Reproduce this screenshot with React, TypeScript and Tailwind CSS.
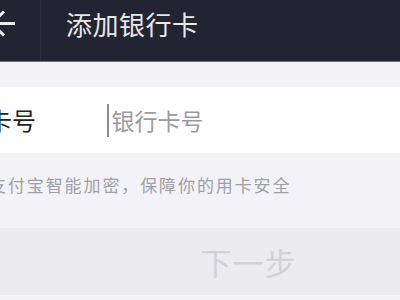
export default function App() {
  return (
    <div
      className="w-[400px] h-[300px] overflow-hidden bg-[#f3f3f7]"
      style={{ fontFamily: '"Noto Sans CJK SC", "Noto Sans", sans-serif' }}
    >
      <header className="h-[62px] flex bg-[#222431] border-b border-[#6f7180]">
        <div className="w-[41px] h-full border-r border-[#2c2e3b] relative">
          <svg width="41" height="48" viewBox="0 0 41 48" className="absolute left-0 top-0">
            <path d="M-8 23.5H15M4 11.5L-8 23.5L4 35.5" fill="none" stroke="#ececec" strokeWidth="3" />
          </svg>
        </div>
        <h1 className="ml-[25px] pt-[6px] text-[26px] tracking-[0.5px] leading-[36px] text-[#e8e8ea]">添加银行卡</h1>
      </header>

      <div className="h-[25px]" />

      <div className="h-[66px] bg-white flex items-center">
        <span className="ml-[-12px] w-[119px] text-[24px] text-[#222] leading-none">卡号</span>
        <span className="w-[1.5px] h-[33px] bg-[#8c8c8c]" />
        <span className="ml-[3px] text-[23px] text-[#9b9b9b] leading-none">银行卡号</span>
      </div>

      <p className="h-[75px] pt-[20px] ml-[-11px] text-[17px] leading-[24px] tracking-[1.9px] text-[#a0a0a5] whitespace-nowrap">
        支付宝智能加密，保障你的用卡安全
      </p>

      <button className="w-[400px] h-[67px] pl-[97px] flex items-center justify-center bg-[#ebebf0] text-[31px] tracking-[1px] text-[#d2d2d6] leading-none">
        下一步
      </button>
    </div>
  );
}
